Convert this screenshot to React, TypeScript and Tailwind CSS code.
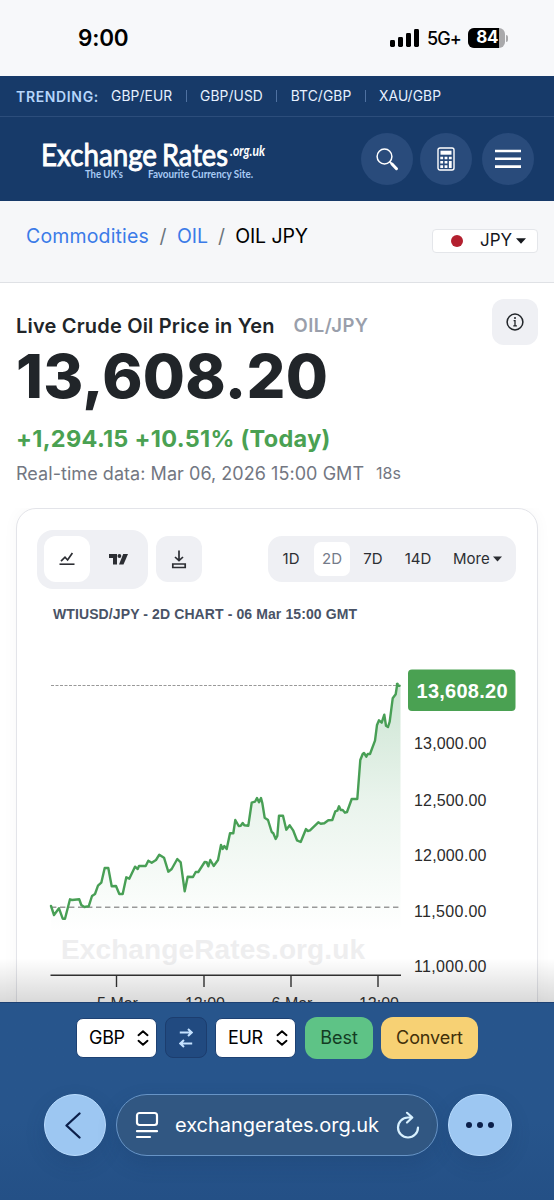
import React, { type PropsWithChildren } from "react";

const trending = ["GBP/EUR", "GBP/USD", "BTC/GBP", "XAU/GBP"];

const axisLabels = [
	{ y: 743.5, label: "13,000.00" },
	{ y: 800, label: "12,500.00" },
	{ y: 855.5, label: "12,000.00" },
	{ y: 911, label: "11,500.00" },
	{ y: 966.5, label: "11,000.00" },
];

const timeLabels = [
	{ x: 116.5, label: "5 Mar" },
	{ x: 204, label: "12:00" },
	{ x: 291, label: "6 Mar" },
	{ x: 378, label: "12:00" },
];

const line =
	"51,906 54,915 59,908.3 62.7,918.7 65,918.7 70,899.3 72,900 79.3,899.3 81.3,905 84.3,907 88.7,906.3 92,896 95,894 98,885.7 101.3,882.7 104.7,868 108.3,868 111.7,886.3 116,886 119.3,894 122.7,894 126.3,877.3 129.3,878.7 135,866.7 137.7,869 139,866 145.7,866 148.3,860.7 151.7,862.7 156,860 159.3,854.7 164,857.7 168.3,871.7 171.7,869 177.3,859 180.7,862.3 184.7,891.3 187.7,876.7 193,877 195.7,872 198.3,872 204.7,862 206.7,862.3 208.3,866.3 210.3,860 213.7,866 218,860 221,845 222.7,849 224.3,846 226.7,849 230,833.3 233.3,833.3 235.3,820 238.7,826 240.7,825.7 242.7,823 244.3,825.3 248.3,825.7 251.7,802.7 255,801.7 257,798 259,802.3 261,798 262.3,803 264.7,817.7 268,820 271.7,832 273.3,833.3 275.7,839 277.3,836 279,815.7 283,815.7 286.3,829.7 289.7,825.3 293.3,830.7 297,840.3 300.7,842 306,829 307.7,831 310,830.3 318.3,822.3 320.7,823.7 324.3,823.3 328.3,820.3 332.3,820 335.3,811.3 337.3,810.7 339,806.3 340.7,810 342.7,810 345,812.7 347,812 351.7,799 357.3,799 360.3,760 362.7,754 364,753 366.3,756.7 367.7,754 370,754 375,740.7 377,725 379,720.3 381.7,722.7 384.3,714.7 386,725.7 388,727 389.7,721.7 392.7,698.3 395.7,694.3 397,685.7 399.5,685.7";

const RoundButton: React.FC<PropsWithChildren> = ({ children }) => (
	<button className="flex h-[52px] w-[52px] items-center justify-center rounded-full bg-[#294b7b] text-white">
		{children}
	</button>
);

const StatusBar = () => (
	<div className="flex h-[76px] shrink-0 items-center justify-between bg-[#f7f8fa] pl-[78px] pr-[46px] text-black">
		<span className="text-[22.5px] font-semibold tracking-[-0.2px]">9:00</span>
		<div className="flex items-center">
			<svg width="29" height="18" viewBox="0 0 29 18" className="mr-[8px]">
				<rect x="0" y="11" width="5" height="7" rx="1.4" />
				<rect x="8" y="8" width="5" height="10" rx="1.4" />
				<rect x="16" y="4" width="5" height="14" rx="1.4" />
				<rect x="24" y="0" width="5" height="18" rx="1.4" />
			</svg>
			<span className="w-[41px] whitespace-nowrap text-[18px] font-medium tracking-[-0.9px]">5G+</span>
			<div className="flex h-5 w-[37px] items-center overflow-hidden rounded-[6px] bg-[#a9a9ab]">
				<div className="flex h-5 w-[31px] items-center justify-end bg-black pr-px text-[17px] font-bold tracking-[-0.4px] text-white">84</div>
			</div>
			<div className="ml-px h-[7px] w-[2px] rounded-r bg-[#a9a9ab]" />
		</div>
	</div>
);

const Logo = () => (
	<svg width="232" height="50" viewBox="36 135 232 50" fill="#fff" className="overflow-visible">
		<g fontFamily="Lato, sans-serif" fontSize="31" stroke="#fff" strokeWidth="0.9">
			<text x="41" y="166.5" textLength="116" lengthAdjust="spacingAndGlyphs">Exchange</text>
			<text x="162" y="167" textLength="66" lengthAdjust="spacingAndGlyphs">Rates</text>
		</g>
		<text x="230" y="156.5" fontFamily="Lato, sans-serif" fontStyle="italic" fontWeight="700" fontSize="14.5" textLength="35" lengthAdjust="spacingAndGlyphs">.org.uk</text>
		<g fontFamily="Lato, sans-serif" fontWeight="700" fontSize="10.5" fill="#a9cbf5">
			<text x="85" y="179.3" textLength="38" lengthAdjust="spacingAndGlyphs">The UK's</text>
			<text x="148" y="179.3" textLength="105" lengthAdjust="spacingAndGlyphs">Favourite Currency Site.</text>
		</g>
	</svg>
);

const Header = () => (
	<header className="shrink-0 bg-[#173a69]">
		<div className="flex h-[41px] items-center border-b border-[#2c4d7b] pl-4 text-[13.8px] text-[#e6f0ff]">
			<span className="w-[95px] text-[14px] font-semibold tracking-[0.65px] text-[#b5d5fb]">TRENDING:</span>
			{trending.map((pair, i) => (
				<React.Fragment key={pair}>
					{i > 0 && <span className="mx-[13.4px] h-3 w-px bg-[#4f71a1]" />}
					<span className="tracking-[0.1px]">{pair}</span>
				</React.Fragment>
			))}
		</div>
		<div className="flex h-[84px] items-center pl-9 pr-[20px]">
			<Logo />
			<div className="ml-auto flex">
				<RoundButton>
					<svg width="24" height="24" viewBox="0 0 24 24" fill="none" stroke="currentColor" strokeLinecap="round">
						<circle cx="9.5" cy="9.5" r="7.4" strokeWidth="1.5" />
						<path d="M15 15l1.6 1.6" strokeWidth="1.8" />
						<path d="M17 17l4.5 4.7" strokeWidth="3" />
					</svg>
				</RoundButton>
				<div className="ml-[7px] mr-[10px]">
					<RoundButton>
						<svg width="18" height="24" viewBox="0 0 18 24" fill="none" stroke="currentColor">
							<rect x="1" y="1" width="16" height="22" rx="2" strokeWidth="1.4" />
							<rect x="3.5" y="3.7" width="11" height="4" fill="currentColor" stroke="none" />
							<g fill="currentColor" stroke="none">
								<path d="M3.3 9.7h2.8v2.6H3.3zM7.6 9.7h2.8v2.6H7.6zM11.9 9.7h2.8v2.6h-2.8zM3.3 14h2.8v2.6H3.3zM7.6 14h2.8v2.6H7.6zM3.3 18.3h2.8v2.6H3.3zM7.6 18.3h2.8v2.6H7.6zM11.9 14h2.8v6.9h-2.8z" />
							</g>
						</svg>
					</RoundButton>
				</div>
				<RoundButton>
					<svg width="26" height="20" viewBox="0 0 26 20" fill="currentColor">
						<path d="M0 .7h26v2.6H0zM0 8.5h26v2.6H0zM0 16.3h26v2.6H0z" />
					</svg>
				</RoundButton>
			</div>
		</div>
	</header>
);

const Caret = ({ className = "" }: { className?: string }) => (
	<svg width="10" height="6" viewBox="0 0 10 6" fill="currentColor" className={className}>
		<path d="M0 .3h10L5 5.7z" />
	</svg>
);

const Breadcrumb = () => (
	<div className="flex h-[82px] shrink-0 justify-between border-b border-[#dfe1e5] bg-[#f6f7f9] pl-[26px] pr-4">
		<div className="flex h-[72px] items-center whitespace-nowrap text-[19.5px] text-black">
			<span className="tracking-[0.15px] text-[#3b7be8]">Commodities</span>
			<span className="mx-[10.5px] text-[#6c757d]">/</span>
			<span className="text-[#3b7be8]">OIL</span>
			<span className="mx-[10px] text-[#6c757d]">/</span>
			<span className="tracking-[-0.1px]">OIL JPY</span>
		</div>
		<div className="mt-[28px] flex h-6 w-[106px] items-center rounded-[4px] border border-[#e4e6ea] bg-white pl-[18px] text-[#16181d]">
			<span className="mr-[17px] h-3 w-3 rounded-full bg-[#b3202f]" />
			<span className="text-[17px]">JPY</span>
			<Caret className="ml-[4px]" />
		</div>
	</div>
);

const Price = () => (
	<section className="flex h-[225px] shrink-0 justify-between pl-4 pr-4">
		<div className="whitespace-nowrap pt-[30px] text-[#212529]">
			<div className="flex h-[25px] items-center pt-px text-[20px] font-semibold">
				<h1 className="w-[277.5px] tracking-[0.19px]">Live Crude Oil Price in Yen</h1>
				<span className="text-[18.5px] tracking-[0.5px] text-[#9a9fab]">OIL/JPY</span>
			</div>
			<p className="h-[77px] text-[61px] font-extrabold leading-[77px] tracking-[0.25px]">13,608.20</p>
			<p className="h-[46px] text-[23.5px] font-bold leading-[47px] tracking-[0.3px] text-[#4aa152]">+1,294.15 +10.51% (Today)</p>
			<p className="flex h-[24px] items-center text-[18px] text-[#737782]">
				<span className="w-[360px] tracking-[0.05px]">Real-time data: Mar 06, 2026 15:00 GMT</span>
				<span className="text-[16px]">18s</span>
			</p>
		</div>
		<button className="mt-4 flex h-[46px] w-[46px] items-center justify-center rounded-[12px] bg-[#eff0f4] text-[#212529]">
			<svg width="18" height="18" viewBox="0 0 18 18" fill="none" stroke="currentColor">
				<circle cx="9" cy="9" r="7.9" strokeWidth="1.5" />
				<path d="M7.6 7.6H9v5M7.3 12.8h3.6" strokeWidth="1.3" />
				<circle cx="9" cy="5" r="1" fill="currentColor" stroke="none" />
			</svg>
		</button>
	</section>
);

const Toolbar = () => (
	<div className="flex h-[79px] items-center pl-5 pr-[21px] pt-[21px] text-[#2c2e33]">
		<div className="flex h-[59px] w-[111px] items-center rounded-[16px] bg-[#eff0f4] pl-[7px]">
			<button className="flex h-[46px] w-[46px] items-center justify-center rounded-[12px] bg-white">
				<svg width="16" height="14" viewBox="0 0 16 14" fill="none" stroke="currentColor">
					<path d="M.5 12.2h15" strokeWidth="1.6" />
					<path d="M2 9.2l4-4 2.6 2.8L13.4 1" strokeWidth="1.7" />
				</svg>
			</button>
			<svg width="19" height="11" viewBox="0 0 19 11" fill="currentColor" className="ml-[19px]">
				<path d="M0 0h8v10.5H4V4H0z" />
				<circle cx="10.4" cy="2" r="1.9" />
				<path d="M14.2 0H19l-4.5 10.5H10z" />
			</svg>
		</div>
		<button className="ml-2 flex h-[46px] w-[46px] items-center justify-center rounded-[12px] bg-[#eff0f4]">
			<svg width="16" height="19" viewBox="0 0 16 19" fill="none" stroke="currentColor" strokeWidth="1.7">
				<path d="M8 .5v10M4 7l4 3.7L12 7M1.8 14h12.4v3.5H1.8z" />
			</svg>
		</button>
		<div className="ml-auto flex h-[46px] w-[248px] items-center rounded-[14px] bg-[#eff0f4] text-[15px]">
			<span className="w-[46px] text-center">1D</span>
			<span className="flex h-[34px] w-[36px] items-center justify-center rounded-[7px] bg-white text-[#757b8a]">2D</span>
			<span className="w-[46px] text-center">7D</span>
			<span className="w-[44px] text-center">14D</span>
			<span className="ml-[13px]">More</span>
			<Caret className="ml-[3px] w-[9px]" />
		</div>
	</div>
);

const Chart = () => (
	<svg width="520" height="440" viewBox="17 588 520 440" fontFamily="Liberation Sans, Arial, sans-serif" className="block shrink-0">
		<defs>
			<linearGradient id="area" x1="0" y1="684" x2="0" y2="976" gradientUnits="userSpaceOnUse">
				<stop offset="0" stopColor="#4aa162" stopOpacity="0.28" />
				<stop offset="0.4" stopColor="#4aa162" stopOpacity="0.12" />
				<stop offset="0.85" stopColor="#4aa162" stopOpacity="0" />
			</linearGradient>
		</defs>
		<text x="53" y="619" fontSize="14" fontWeight="700" fill="#495366" textLength="304">
			WTIUSD/JPY - 2D CHART - 06 Mar 15:00 GMT
		</text>
		<text x="61" y="959" fontSize="28" fontWeight="700" fill="#eeeeef" textLength="304">ExchangeRates.org.uk</text>
		<polygon points={`51,976 ${line} 400.5,685.7 400.5,976`} fill="url(#area)" />
		<path d="M51 685.5h350" stroke="#999" strokeDasharray="3 1.5" />
		<path d="M51 907.2h350" stroke="#999" strokeWidth="1.4" strokeDasharray="5.4 3.6" />
		<polyline points={line} fill="none" stroke="#489f55" strokeWidth="2.4" strokeLinejoin="round" strokeLinecap="round" />
		<circle cx="397.3" cy="684" r="1.6" fill="#489f55" />
		<path d="M50.5 975.3H401" stroke="#333" strokeWidth="1.5" />
		{timeLabels.map(({ x, label }) => (
			<g key={x}>
				<path d={`M${x} 975v12`} stroke="#333" strokeWidth="1.4" />
				<text x={x + 1} y="1009" fontSize="16" textAnchor="middle" fill="#333">{label}</text>
			</g>
		))}
		{axisLabels.map(({ y, label }) => (
			<text key={y} x="414" y={y + 5.5} fontSize="16" fill="#2b2b2b" textLength="72.5">{label}</text>
		))}
		<rect x="408" y="669.5" width="107.5" height="41.5" rx="4" fill="#4aa152" />
		<text x="416.5" y="697.5" fontSize="20" fontWeight="700" fill="#fff" textLength="91">13,608.20</text>
	</svg>
);

const CurrencySelect = ({ code }: { code: string }) => (
	<div className="flex h-10 w-[81px] items-center justify-between rounded-[7px] border border-[#1d4173] bg-white pl-3 pr-[7px] text-[18px] tracking-[-0.3px] text-black">
		{code}
		<svg width="12" height="16" viewBox="0 0 12 16" fill="none" stroke="currentColor" strokeWidth="1.9" strokeLinecap="round" strokeLinejoin="round">
			<path d="M1.5 5.2L6 1.2l4.5 4M1.5 10.8l4.5 4 4.5-4" />
		</svg>
	</div>
);

const BottomBar = () => (
	<footer className="relative flex h-[198px] shrink-0 flex-col border-t border-[#1d4173] bg-linear-to-b from-[#27558c] from-60% to-[#245086]">
		<div className="mt-[14px] flex h-[41px] items-center pl-[76px] text-[18px]">
			<CurrencySelect code="GBP" />
			<button className="mx-2 flex h-[41px] w-[42px] items-center justify-center rounded-[8px] border border-[#1c3d6e] bg-[#214a80]">
				<svg width="14" height="20" viewBox="0 0 14 20" fill="none" stroke="#c5e2ff" strokeWidth="2">
					<path d="M.8 4.5h11.5M9 1l3.7 3.5L9 8M13.2 15.5H1.7M5 12l-3.7 3.5L5 19" />
				</svg>
			</button>
			<CurrencySelect code="EUR" />
			<button className="ml-[9px] h-[42px] w-[68px] rounded-[12px] bg-[#5ec386] text-[#133c23]">Best</button>
			<button className="ml-2 h-[42px] w-[97px] rounded-[12px] bg-[#f7d174] tracking-[-0.1px] text-[#412f0a]">Convert</button>
		</div>
		<div className="mt-[36px] flex h-[62px] items-center pl-[44px]">
			<button className="flex h-[62px] w-[62px] items-center justify-center rounded-full border border-[#b9dcff] bg-[#9dc7f2] shadow-[0_8px_20px_rgba(20,50,90,0.15)]">
				<svg width="16" height="27" viewBox="0 0 16 27" fill="none" stroke="#0b1f4a" strokeWidth="2.3" strokeLinecap="round" strokeLinejoin="round" className="-ml-1">
					<path d="M14.5 1.5L1.5 13.5l13 12" />
				</svg>
			</button>
			<div className="ml-[10px] flex h-[62px] w-[322px] items-center rounded-full border border-[#6794c6] bg-[#315782] pl-[18px] pr-[17px] text-white shadow-[0_8px_20px_rgba(20,50,90,0.2)]">
				<svg width="24" height="28" viewBox="0 0 24 28" fill="none" stroke="currentColor" strokeWidth="2.2" strokeLinecap="round">
					<rect x="2" y="2" width="20" height="12" rx="2.5" />
					<path d="M2 20.2h20M2 26h13" />
				</svg>
				<span className="ml-[16px] whitespace-nowrap text-[20px] tracking-[-0.05px]">exchangerates.org.uk</span>
				<svg width="24" height="28" viewBox="0 0 24 28" fill="none" stroke="#d8f1ff" strokeWidth="2.2" strokeLinecap="round" strokeLinejoin="round" className="ml-auto">
					<path d="M15.5 6.5H12a10 10 0 1 0 10 10M11 1.8l5.3 4.7-5.3 5" />
				</svg>
			</div>
			<button className="ml-[10px] flex h-[62px] w-[64px] items-center justify-center gap-[5px] rounded-full border border-[#b9dcff] bg-[#9dc7f2] shadow-[0_8px_20px_rgba(20,50,90,0.15)]">
				<span className="h-[6px] w-[6px] rounded-full bg-[#0b1f4a]" />
				<span className="h-[6px] w-[6px] rounded-full bg-[#0b1f4a]" />
				<span className="h-[6px] w-[6px] rounded-full bg-[#0b1f4a]" />
			</button>
		</div>
	</footer>
);

const App: React.FC = () => {
	return (
		<div className="flex h-[1200px] w-[554px] flex-col overflow-hidden bg-white font-['Inter',sans-serif]">
			<StatusBar />
			<Header />
			<Breadcrumb />
			<Price />
			<main className="relative min-h-0 flex-1 overflow-hidden">
				<div className="mx-4 h-[560px] rounded-[20px] border border-[#e3e4e9] bg-white shadow-[0_0_16px_rgba(0,0,0,0.035)]">
					<Toolbar />
					<Chart />
				</div>
				<div className="absolute inset-x-0 bottom-0 h-11 bg-linear-to-b from-transparent to-black/15" />
			</main>
			<BottomBar />
		</div>
	);
};

export default App;
